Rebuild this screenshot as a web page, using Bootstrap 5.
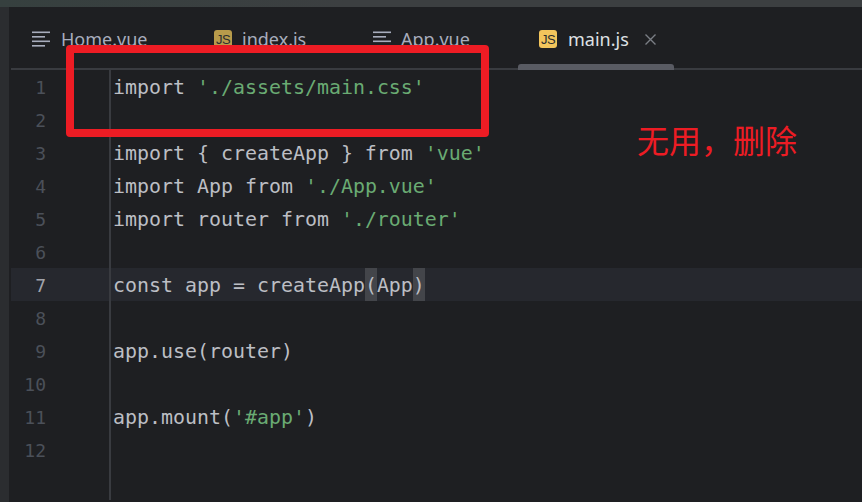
<!DOCTYPE html>
<html lang="zh">
<head>
<meta charset="utf-8">
<link href="https://cdn.jsdelivr.net/npm/bootstrap@5.3.0/dist/css/bootstrap.min.css" rel="stylesheet">
<style>
html,body{width:862px;height:502px;overflow:hidden;background:#1e1f22;}
.shot{position:relative;width:862px;height:502px;background:#1e1f22;}
.topstrip{height:7px;background:linear-gradient(90deg,#36403f,#3c3f41 40%,#3c3f41);}
.rail{width:9px;background:#2b2d30;flex:none;}
.railgap{width:2px;background:#1e1f22;flex:none;}
.tabbar{height:63px;border-bottom:2px solid #393b40;padding-left:21px;}
.tabitem{position:relative;height:61px;font:18px "Noto Sans",sans-serif;color:#a8adbd;flex:none;padding-top:20px;}
.tabitem .lbl{line-height:25px;}
.t1{width:182px;}.t2{width:159px;}.t3{width:166px;}
.t4{width:135px;color:#dfe1e5;}
.under{position:absolute;left:-21px;bottom:-2px;width:156px;height:6px;background:#595b63;border-radius:3px 3px 0 0;}
.docglyph{margin-top:4px;margin-right:11px;flex:none;}
.docglyph2{margin-right:10px;}
.closex{margin-left:16px;margin-top:7px;flex:none;}
.jsicon{width:18px;height:18px;margin-top:3px;border-radius:3px;font:400 13px/20px "Liberation Sans",Arial,sans-serif;letter-spacing:-.5px;color:#2b2d30;text-align:center;background:#b89b4b;margin-right:10px;flex:none;}
.jsactive{background:#f2c55c;margin-right:11px;}
.gutter{width:100px;flex:none;border-right:2px solid #393b40;}
.ln{height:33px;padding-right:63px;text-align:right;font:18px/35px "DejaVu Sans Mono",monospace;color:#4b5059;}
.ln.cur{background:#26282e;color:#a1a3ab;}
.cl{height:33px;padding-left:2px;font:19.93px/35px "DejaVu Sans Mono",monospace;color:#bcbec4;white-space:pre;}
.cl.cur{background:#26282e;}
.str{color:#6aab73;}
.pair{background:#43454a;display:inline-block;height:33px;vertical-align:top;}
.redbox{position:absolute;left:66px;top:45px;width:423px;height:92px;border:8px solid #ed1c24;border-radius:4px;}
.note{position:absolute;left:637px;top:119px;font:32px/40px "Noto Sans CJK SC",sans-serif;color:#ed1c24;}
</style>
</head>
<body>
<div class="shot">
<div class="topstrip"></div>
<div class="d-flex" style="height:495px">
<div class="rail"></div><div class="railgap"></div>
<div class="flex-grow-1">
<div class="tabbar d-flex">
<div class="tabitem t1 d-flex"><svg width="18" height="16" viewBox="0 0 18 16" class="docglyph" fill="#a8adbd"><rect width="18" height="1.6" y="0.5"/><rect width="13" height="1.6" y="5"/><rect width="18" height="1.6" y="9.5"/><rect width="13" height="1.6" y="14"/></svg><span class="lbl">Home.vue</span></div>
<div class="tabitem t2 d-flex"><div class="jsicon">JS</div><span class="lbl">index.js</span></div>
<div class="tabitem t3 d-flex"><svg width="18" height="16" viewBox="0 0 18 16" class="docglyph docglyph2" fill="#a8adbd"><rect width="18" height="1.6" y="0.5"/><rect width="13" height="1.6" y="5"/><rect width="18" height="1.6" y="9.5"/><rect width="13" height="1.6" y="14"/></svg><span class="lbl">App.vue</span></div>
<div class="tabitem t4 d-flex"><div class="jsicon jsactive">JS</div><span class="lbl">main.js</span><svg class="closex" width="11" height="11" viewBox="0 0 11 11" stroke="#7a7e85" stroke-width="1.4"><path d="M.5.5 10.5 10.5M10.5.5.5 10.5"/></svg><div class="under"></div></div>
</div>
<div class="d-flex">
<div class="gutter">
<div class="ln">1</div><div class="ln">2</div><div class="ln">3</div><div class="ln">4</div><div class="ln">5</div><div class="ln">6</div><div class="ln cur">7</div><div class="ln">8</div><div class="ln">9</div><div class="ln">10</div><div class="ln">11</div><div class="ln">12</div>
<div style="height:34px"></div>
</div>
<div class="flex-grow-1">
<div class="cl">import <span class="str">'./assets/main.css'</span></div>
<div class="cl"> </div>
<div class="cl">import { createApp } from <span class="str">'vue'</span></div>
<div class="cl">import App from <span class="str">'./App.vue'</span></div>
<div class="cl">import router from <span class="str">'./router'</span></div>
<div class="cl"> </div>
<div class="cl cur">const app = createApp<span class="pair">(</span>App<span class="pair">)</span></div>
<div class="cl"> </div>
<div class="cl">app.use(router)</div>
<div class="cl"> </div>
<div class="cl">app.mount(<span class="str">'#app'</span>)</div>
<div class="cl"> </div>
</div>
</div>
</div>
</div>
<div class="redbox"></div>
<div class="note">无用，删除</div>
</div>
</body>
</html>
